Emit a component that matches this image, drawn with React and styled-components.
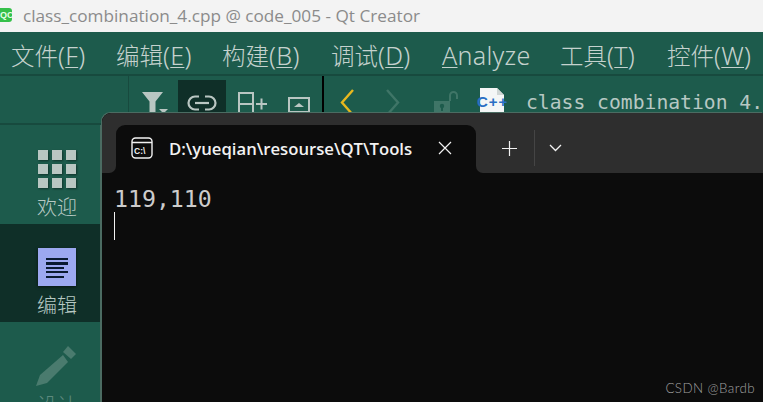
import React from 'react';
import styled, { createGlobalStyle } from 'styled-components';

const GlobalStyle = createGlobalStyle`
  html, body { margin: 0; padding: 0; background: #0c0c0c; }
  #root { width: 763px; height: 402px; overflow: hidden; }
`;

const Page = styled.div`
  position: relative;
  width: 763px;
  height: 402px;
  overflow: hidden;
  display: flex;
  flex-direction: column;
  background: #1d5b4c;
`;

const TitleBar = styled.div`
  height: 32px;
  flex: none;
  box-sizing: border-box;
  padding-bottom: 1px;
  background: #f3f3f3;
  display: flex;
  align-items: center;
  gap: 11px;
  color: #8b8b8b;
  font: 17.2px "Open Sans", "Liberation Sans", sans-serif;
  white-space: nowrap;
`;

const AppBadge = styled.div`
  width: 12px;
  height: 14px;
  margin-top: -1px;
  background: #35c04a;
  border-radius: 0 3px 3px 0;
  color: #e8ffe8;
  font: 700 9px/14px "Liberation Sans", sans-serif;
  overflow: hidden;
  text-align: right;
`;

const MenuBar = styled.div`
  height: 44px;
  flex: none;
  box-sizing: border-box;
  border-bottom: 2px solid #174a3e;
  display: flex;
  align-items: center;
  padding: 4px 0 0 11px;
  color: #c5d2ce;
  font: 300 23.500px "Noto Sans CJK SC", "Noto Sans", sans-serif;
  white-space: nowrap;
`;

const MenuItem = styled.div`
  width: ${(p) => p.$w}px;
  flex: none;
  u { text-underline-offset: 2px; text-decoration-thickness: 1px; }
`;

const MenuLatin = styled.span`
  font: 300 25px "Noto Sans", sans-serif;
  letter-spacing: 0.3px;
`;

const ToolBar = styled.div`
  height: 49px;
  flex: none;
  box-sizing: border-box;
  border-bottom: 2px solid #174a3e;
  display: flex;
  align-items: flex-start;
`;

const ToolSpacer = styled.div`
  width: ${(p) => p.$w}px;
  height: 100%;
  flex: none;
  box-sizing: border-box;
  ${(p) => p.$line && `border-right: ${p.$thick || 1}px solid ${p.$line};`}
`;

const ToolIcon = styled.div`
  width: ${(p) => p.$w}px;
  height: 45px;
  flex: none;
  display: flex;
  align-items: flex-start;
  justify-content: center;
  padding-top: ${(p) => p.$top}px;
  box-sizing: border-box;
  ${(p) => p.$active && 'background: #0f2f28; margin-top: 4px;'}
`;

const FileName = styled.div`
  flex: none;
  margin-top: 15px;
  color: #b7c8c3;
  font: 19.700px "DejaVu Sans Mono", "Liberation Mono", monospace;
  white-space: nowrap;
`;

const Main = styled.div`
  flex: 1;
  display: flex;
`;

const SideBar = styled.div`
  width: 102px;
  flex: none;
  box-sizing: border-box;
  border-right: 2px solid #4b6c62;
  display: flex;
  flex-direction: column;
`;

const SideItem = styled.div`
  height: ${(p) => p.$h}px;
  flex: none;
  display: flex;
  flex-direction: column;
  align-items: center;
  padding: ${(p) => p.$top}px 0 0 14px;
  box-sizing: border-box;
  background: ${(p) => (p.$active ? '#0f2f28' : '#1d5b4c')};
`;

const SideLabel = styled.div`
  margin-top: ${(p) => p.$mt}px;
  font: 300 20px/24px "Noto Sans CJK SC", sans-serif;
  color: ${(p) => (p.$dim ? '#5d8a7e' : '#b7c9c4')};
`;

const WelcomeGrid = styled.div`
  display: grid;
  grid-template-columns: repeat(3, 10px);
  grid-auto-rows: 10px;
  gap: 4px;
`;

const GridCell = styled.div`
  background: #b9c6c2;
  box-shadow: 1px 1px 2px rgba(0, 0, 0, 0.45);
`;

const EditIcon = styled.div`
  width: 38px;
  height: 38px;
  background: #9ca8f0;
  box-shadow: 0 1px 3px rgba(0, 0, 0, 0.6);
  box-sizing: border-box;
  padding: 10px 8px 0;
  display: flex;
  flex-direction: column;
  gap: 2.200px;
`;

const EditLine = styled.div`
  width: ${(p) => p.$w}px;
  height: 2.200px;
  background: #0a1a30;
`;

const TerminalWindow = styled.div`
  position: absolute;
  left: 102px;
  top: 113px;
  right: 0;
  bottom: 0;
  background: #0c0c0c;
  border-top-left-radius: 9px;
  box-shadow: -1px -1px 0 #4b6c62;
  overflow: hidden;
  display: flex;
  flex-direction: column;
`;

const TabStrip = styled.div`
  height: 60px;
  flex: none;
  display: grid;
  grid-template-rows: 12px 48px;
  background: #0c0c0c;
`;

const TabTop = styled.div`
  background: #2e2e2e;
`;

const TabRow = styled.div`
  display: flex;
  background: linear-gradient(#2e2e2e 50%, #0c0c0c 50%);
`;

const TabGap = styled.div`
  width: 14px;
  flex: none;
  background: #2e2e2e;
  border-bottom-right-radius: 7px;
`;

const ActiveTab = styled.div`
  width: 360px;
  flex: none;
  box-sizing: border-box;
  background: #0c0c0c;
  border-radius: 9px 9px 0 0;
  display: flex;
  align-items: center;
  padding: 0 0 2px 15px;
  color: #f2f2f2;
  font: 600 16.700px "Open Sans", "Liberation Sans", sans-serif;
  white-space: nowrap;
`;

const TabTitle = styled.span`
  margin-left: 16px;
  width: 269px;
  flex: none;
`;

const TabRest = styled.div`
  flex: 1;
  background: #2e2e2e;
  border-bottom-left-radius: 7px;
  display: flex;
  align-items: center;
  padding: 0 0 2px 26px;
`;

const TabDivider = styled.div`
  width: 1px;
  height: 36px;
  background: #454545;
  margin: 0 14px 0 17px;
`;

const TerminalBody = styled.div`
  flex: 1;
  padding: 12px 0 0 12px;
  color: #cccccc;
  font: 23.200px/28px "DejaVu Sans Mono", "Liberation Mono", monospace;
`;

const Cursor = styled.div`
  width: 1px;
  height: 28px;
  margin-top: -1px;
  background: #f2f2f2;
`;

const Watermark = styled.div`
  position: absolute;
  right: 8px;
  bottom: 6px;
  color: #a0a0a0;
  font: 300 13.400px "Lato", "Noto Sans", sans-serif;
  letter-spacing: 0.4px;
`;

const FilterIcon = () => (
  <svg width="26" height="26" viewBox="0 0 26 26">
    <path d="M0 0h21l-7.500 9.500V21l-6-0V9.500z" fill="#b9c6c2" />
    <path d="M17 17h9l-4.500 4.500z" fill="#b9c6c2" />
  </svg>
);

const LinkIcon = () => (
  <svg width="30" height="16" viewBox="0 0 30 16" fill="none" stroke="#b9c6c2" strokeWidth="2.200">
    <path d="M12 1.500H8a6.500 6.500 0 0 0 0 13h4M18 1.500h4a6.500 6.500 0 0 1 0 13h-4" />
    <path d="M8 8h14" />
  </svg>
);

const SplitAddIcon = () => (
  <svg width="30" height="24" viewBox="0 0 30 24" fill="none" stroke="#b9c6c2" strokeWidth="2">
    <rect x="1" y="1" width="14" height="24" />
    <path d="M1 12h14M18 12h11M23.500 6.500v11" />
  </svg>
);

const PanelUpIcon = () => (
  <svg width="22" height="17" viewBox="0 0 22 17" fill="none">
    <rect x="1" y="1" width="20" height="15" stroke="#b9c6c2" strokeWidth="2" />
    <path d="M6 10l5-4 5 4z" fill="#b9c6c2" />
    <path d="M1 14h20v3H1z" fill="#b9c6c2" />
  </svg>
);

const ChevronIcon = ({ flip, color }) => (
  <svg width="15" height="27" viewBox="0 0 15 27" fill="none" stroke={color} strokeWidth="2.400">
    <path d={flip ? 'M2 1l11 12.500L2 26' : 'M13 1L2 13.500 13 26'} />
  </svg>
);

const LockIcon = () => (
  <svg width="24" height="24" viewBox="0 0 24 24">
    <path d="M16 11V5.500a3.500 3.500 0 0 1 7 0V9" fill="none" stroke="#3f7567" strokeWidth="2" />
    <path d="M0 11h16v13H0z" fill="#3f7567" />
    <circle cx="8" cy="16" r="2.200" fill="#1d5b4c" />
    <path d="M7 17h2v4H7z" fill="#1d5b4c" />
  </svg>
);

const CppFileIcon = () => (
  <svg width="30" height="30" viewBox="0 0 30 30">
    <path d="M3 1h17l7 7v27H3z" fill="#f4f6f6" />
    <path d="M20 1l7 7h-7z" fill="#d0d6d5" />
    <text x="0" y="20" fill="#2a6fc4" fontSize="15" fontWeight="700" fontFamily="Liberation Sans, sans-serif" letterSpacing="1">C++</text>
  </svg>
);

const PencilIcon = () => (
  <svg width="42" height="42" viewBox="0 0 42 42" fill="#4a7b6e">
    <path d="M0 40l4-11 23-20 5 7-21 21z" />
    <path d="M32 0l8 8-5 5-8-7z" />
  </svg>
);

const ConsoleIcon = () => (
  <svg width="22" height="22" viewBox="0 0 22 22" fill="none">
    <rect x="1" y="1" width="20" height="20" rx="3.500" stroke="#f2f2f2" strokeWidth="1.400" />
    <path d="M1 5.500h20" stroke="#f2f2f2" strokeWidth="1.400" />
    <text x="3" y="16.500" fill="#f2f2f2" fontSize="8.500" fontWeight="700" fontFamily="Liberation Sans, sans-serif">C:\</text>
  </svg>
);

const CloseIcon = () => (
  <svg width="14" height="14" viewBox="0 0 14 14" stroke="#f2f2f2" strokeWidth="1.200">
    <path d="M1 1l12 12M13 1L1 13" />
  </svg>
);

const PlusIcon = () => (
  <svg width="15" height="15" viewBox="0 0 15 15" stroke="#f2f2f2" strokeWidth="1.200">
    <path d="M0 7.500h15M7.500 0v15" />
  </svg>
);

const CaretIcon = () => (
  <svg width="13" height="8" viewBox="0 0 13 8" fill="none" stroke="#f2f2f2" strokeWidth="1.300">
    <path d="M1 1l5.500 5.500L12 1" />
  </svg>
);

const menus = [
  { w: 105, cjk: '文件', pre: '(', key: 'F', tail: ')' },
  { w: 106, cjk: '编辑', pre: '(', key: 'E', tail: ')' },
  { w: 109, cjk: '构建', pre: '(', key: 'B', tail: ')' },
  { w: 111, cjk: '调试', pre: '(', key: 'D', tail: ')' },
  { w: 118, cjk: '', pre: '', key: 'A', tail: 'nalyze' },
  { w: 107, cjk: '工具', pre: '(', key: 'T', tail: ')' },
  { w: 96, cjk: '控件', pre: '(', key: 'W', tail: ')' },
];

const App = () => (
  <Page>
    <GlobalStyle />
    <TitleBar>
      <AppBadge>QC</AppBadge>
      class_combination_4.cpp @ code_005 - Qt Creator
    </TitleBar>
    <MenuBar>
      {menus.map((m) => (
        <MenuItem key={m.key} $w={m.w}>
          {m.cjk}
          <MenuLatin>
            {m.pre}
            <u>{m.key}</u>
            {m.tail}
          </MenuLatin>
        </MenuItem>
      ))}
    </MenuBar>
    <ToolBar>
      <ToolSpacer $w={129} $line="#174a3e" />
      <ToolSpacer $w={13} />
      <ToolIcon $w={26} $top={16}><FilterIcon /></ToolIcon>
      <ToolSpacer $w={10} />
      <ToolIcon $w={48} $top={15} $active><LinkIcon /></ToolIcon>
      <ToolSpacer $w={12} />
      <ToolIcon $w={30} $top={16}><SplitAddIcon /></ToolIcon>
      <ToolSpacer $w={20} />
      <ToolIcon $w={22} $top={21}><PanelUpIcon /></ToolIcon>
      <ToolSpacer $w={14} $line="#000" $thick={2} />
      <ToolSpacer $w={16} />
      <ToolIcon $w={15} $top={13}><ChevronIcon color="#e8b81e" /></ToolIcon>
      <ToolSpacer $w={30} />
      <ToolIcon $w={15} $top={13}><ChevronIcon flip color="#3f7567" /></ToolIcon>
      <ToolSpacer $w={34} />
      <ToolIcon $w={24} $top={14}><LockIcon /></ToolIcon>
      <ToolSpacer $w={19} />
      <ToolIcon $w={30} $top={11}><CppFileIcon /></ToolIcon>
      <ToolSpacer $w={19} />
      <FileName>class_combination_4.</FileName>
    </ToolBar>
    <Main>
      <SideBar>
        <SideItem $h={99} $top={25}>
          <WelcomeGrid>
            {Array.from({ length: 9 }, (_, i) => <GridCell key={i} />)}
          </WelcomeGrid>
          <SideLabel $mt={7}>欢迎</SideLabel>
        </SideItem>
        <SideItem $h={98} $top={24} $active>
          <EditIcon>
            {[22, 22, 18, 22, 18].map((w, i) => <EditLine key={i} $w={w} />)}
          </EditIcon>
          <SideLabel $mt={7}>编辑</SideLabel>
        </SideItem>
        <SideItem $h={100} $top={24}>
          <PencilIcon />
          <SideLabel $dim $mt={5}>设计</SideLabel>
        </SideItem>
      </SideBar>
    </Main>
    <TerminalWindow>
      <TabStrip>
        <TabTop />
        <TabRow>
          <TabGap />
          <ActiveTab>
            <ConsoleIcon />
            <TabTitle>D:\yueqian\resourse\QT\Tools</TabTitle>
            <CloseIcon />
          </ActiveTab>
          <TabRest>
            <PlusIcon />
            <TabDivider />
            <CaretIcon />
          </TabRest>
        </TabRow>
      </TabStrip>
      <TerminalBody>
        119,110
        <Cursor />
      </TerminalBody>
    </TerminalWindow>
    <Watermark>CSDN @Bardb</Watermark>
  </Page>
);

export default App;
